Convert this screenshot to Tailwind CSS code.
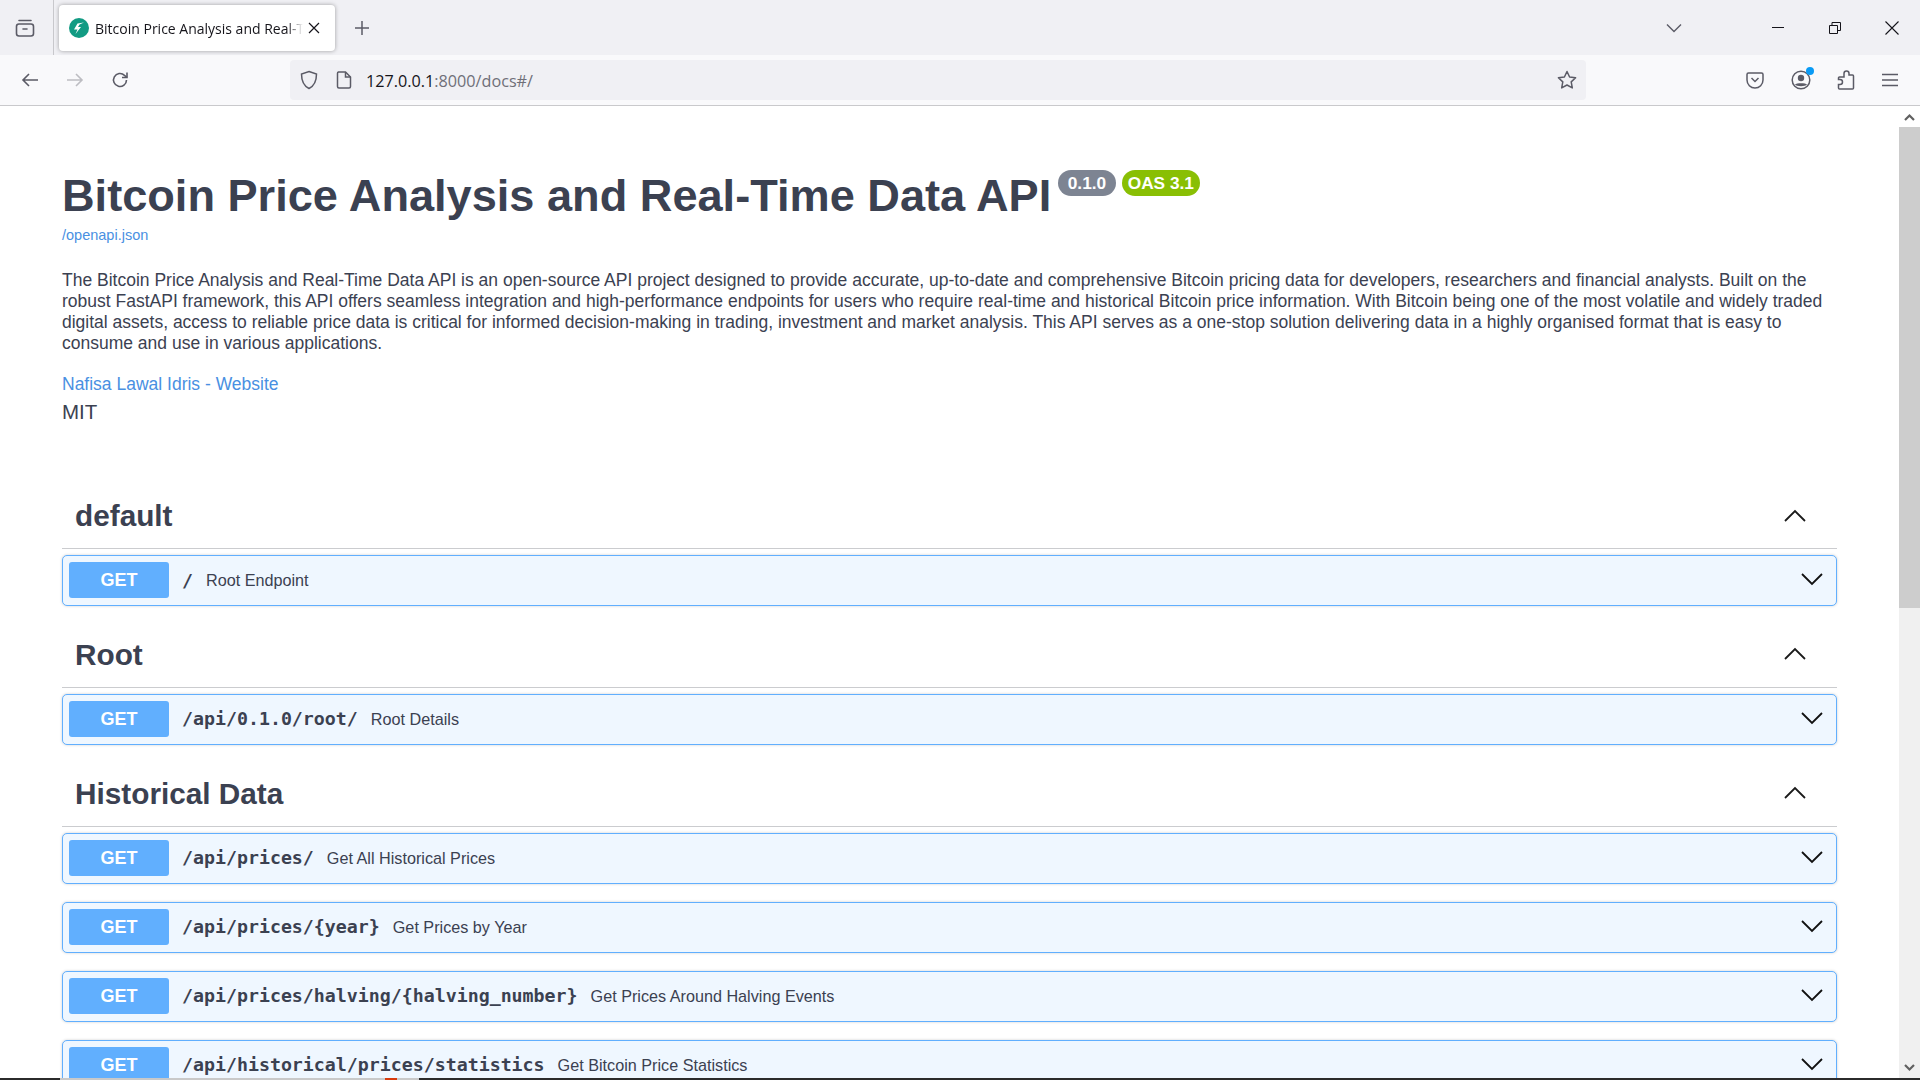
<!DOCTYPE html>
<html lang="en">
<head>
    <meta charset="UTF-8">
    <meta name="viewport" content="width=device-width, initial-scale=1.0">
    <title>Bitcoin Price Analysis and Real-Time Data API - Swagger UI</title>
    <script src="https://cdn.jsdelivr.net/npm/@tailwindcss/browser@4"></script>
</head>
<body class="h-[1080px] w-[1920px] overflow-hidden bg-white font-['Liberation_Sans',sans-serif]">
    <!-- Tab bar -->
    <div class="flex h-[55px] items-center bg-[#f0f0f4] font-['Open_Sans',sans-serif] text-[#15141a]">
        <div class="flex h-full w-[54px] items-center justify-center border-r border-[#c8c8cc] pr-[4px]">
            <svg class="h-5 w-5" fill="none" stroke="#5b5b66" stroke-width="1.6" viewBox="0 0 20 20">
                <rect x="1.500" y="6" width="17" height="12" rx="2.500" />
                <path d="M4 2.500h12M8 11h4" stroke-linecap="round" />
            </svg>
        </div>
        <div class="ml-[5px] flex h-[46px] w-[276px] items-center rounded-[4px] bg-white pl-[10px] shadow-[0_0_4px_rgba(0,0,0,0.35)]">
            <svg class="h-5 w-5 shrink-0" viewBox="0 0 20 20">
                <circle cx="10" cy="10" r="10" fill="#129b83" />
                <path d="M15 4.500 8.500 5.500 5 11.500h3.500L6.500 16l5.500-7h-3l1.500-2.500z" fill="#fff" />
            </svg>
            <div class="mt-px ml-[6px] w-[208px] overflow-hidden text-[14px] whitespace-nowrap [mask-image:linear-gradient(to_right,black_192px,transparent_208px)]">Bitcoin Price Analysis and Real-T</div>
            <svg class="ml-[5px] h-3 w-3" fill="none" stroke="#15141a" stroke-width="1.2" viewBox="0 0 12 12">
                <path d="M1 1l10 10M11 1 1 11" />
            </svg>
        </div>
        <svg class="ml-[19px] h-4 w-4" fill="none" stroke="#5b5b66" stroke-width="1.500" viewBox="0 0 16 16">
            <path d="M8 1v14M1 8h14" />
        </svg>
        <div class="flex-1"></div>
        <svg class="mr-[90px] h-3 w-4" fill="none" stroke="#5b5b66" stroke-width="1.400" viewBox="0 0 16 12">
            <path d="M1 2.500 8 9.500l7-7" />
        </svg>
        <div class="mr-[45px] h-px w-3 bg-[#15141a]"></div>
        <svg class="mr-[44px] h-3 w-3" fill="none" stroke="#15141a" viewBox="0 0 12 12">
            <path d="M.5 3.500h8v8h-8zM3 3.500V.5h8.500v8h-3" />
        </svg>
        <svg class="mr-[21px] h-[14px] w-[14px]" fill="none" stroke="#15141a" stroke-width="1.100" viewBox="0 0 14 14">
            <path d="M.5.5l13 13M13.500.5l-13 13" />
        </svg>
    </div>

    <!-- Toolbar -->
    <div class="flex h-[51px] items-center border-b border-[#c9c9cc] bg-[#f9f9fb]">
        <svg class="ml-[21px] h-4 w-[18px]" fill="none" stroke="#5b5b66" stroke-width="1.600" viewBox="0 0 18 16">
            <path d="M17 8H2M8 2 2 8l6 6" />
        </svg>
        <svg class="ml-[27px] h-4 w-[18px]" fill="none" stroke="#bdbdc2" stroke-width="1.600" viewBox="0 0 18 16">
            <path d="M1 8h15M10 2l6 6-6 6" />
        </svg>
        <svg class="ml-[27px] h-[18px] w-[18px]" fill="none" stroke="#5b5b66" stroke-width="1.600" viewBox="0 0 18 18">
            <path d="M15.500 9a6.500 6.500 0 1 1-2-4.700L16 6.500" />
            <path d="M16 1.500v5h-5" />
        </svg>
        <div class="ml-[161px] flex h-10 w-[1296px] items-center rounded-[4px] bg-[#f0f0f4] pr-[9px] pl-[10px]">
            <svg class="h-5 w-[18px]" fill="none" stroke="#5b5b66" stroke-width="1.500" viewBox="0 0 18 20">
                <path d="M9 1.500 16.500 4c0 7-1.500 11.500-7.500 14.500C3 15.500 1.500 11 1.500 4z" />
            </svg>
            <svg class="ml-[18px] h-[18px] w-4" fill="none" stroke="#5b5b66" stroke-width="1.500" viewBox="0 0 16 18">
                <path d="M2.500 1h7L14.500 6v9.500a1.500 1.500 0 0 1-1.500 1.500H3a1.500 1.500 0 0 1-1.500-1.500V2.500A1.500 1.500 0 0 1 2.500 1z" />
                <path d="M9.500 1v5h5" />
            </svg>
            <div class="mt-[3px] ml-[14px] font-['Open_Sans',sans-serif] text-[16.200px] text-[#15141a]">127.0.0.1<span class="text-[#6f6f78]">:8000/docs#/</span></div>
            <div class="flex-1"></div>
            <svg class="h-5 w-5" fill="none" stroke="#5b5b66" stroke-width="1.500" stroke-linejoin="round" viewBox="0 0 20 20">
                <path d="m10 1.500 2.600 5.500 6 .8-4.400 4.100 1.100 6L10 15l-5.300 2.900 1.100-6L1.400 7.800l6-.8z" />
            </svg>
        </div>
        <div class="flex-1"></div>
        <svg class="mr-[27px] h-[18px] w-[18px]" fill="none" stroke="#5b5b66" stroke-width="1.500" viewBox="0 0 18 18">
            <path d="M2.500 2h13A1.500 1.500 0 0 1 17 3.500V9a8 8 0 0 1-16 0V3.500A1.500 1.500 0 0 1 2.500 2z" />
            <path d="m5.500 7 3.500 3.500L12.500 7" />
        </svg>
        <div class="relative mr-[26px] h-5 w-5">
            <svg class="h-5 w-5" fill="none" viewBox="0 0 20 20">
                <circle cx="10" cy="10" r="8.800" stroke="#5b5b66" stroke-width="1.500" />
                <circle cx="10" cy="8" r="3.200" fill="#5b5b66" />
                <path d="M4 14.500c1.500-1.800 10.500-1.800 12 0-1.500 2.300-10.500 2.300-12 0z" fill="#5b5b66" />
            </svg>
            <div class="absolute -top-[3px] -right-[3px] h-2 w-2 rounded-full bg-[#0a9bf5]"></div>
        </div>
        <svg class="mr-[27px] h-5 w-[18px]" fill="none" stroke="#5b5b66" stroke-width="1.500" viewBox="0 0 18 20">
            <path d="M7 3.500a2.500 2.500 0 0 1 5 0V5h3.500a1 1 0 0 1 1 1v12a1 1 0 0 1-1 1H2.500a1 1 0 0 1-1-1v-3.500H3a2.500 2.500 0 0 0 0-5H1.500V8a1 1 0 0 1 1-1H7z" />
        </svg>
        <svg class="mr-[22px] h-4 w-4" fill="none" stroke="#5b5b66" stroke-width="1.400" viewBox="0 0 16 16">
            <path d="M0 2.500h16M0 8h16M0 13.500h16" />
        </svg>
    </div>

    <!-- Page -->
    <div class="flex h-[972px] overflow-hidden">
        <main class="w-[1899px] overflow-hidden px-[62px] text-[#3b4151]">
            <div class="flex items-start pt-[67px]">
                <h1 class="text-[45.150px] leading-[46px] font-bold whitespace-nowrap">Bitcoin Price Analysis and Real-Time Data API</h1>
                <span class="-mt-[3px] ml-[7px] rounded-[13px] bg-[#7d8492] px-[9.5px] py-[2px] text-[17.300px] leading-[22px] font-bold text-white">0.1.0</span>
                <span class="-mt-[3px] ml-[6px] rounded-[13px] bg-[#89bf04] px-[6px] py-[2px] text-[17.300px] leading-[22px] font-bold text-white">OAS 3.1</span>
            </div>
            <a class="mt-[6px] block text-[14.500px] leading-[20px] text-[#4990e2]" href="#">/openapi.json</a>
            <p class="mt-[25px] w-[1776px] text-[17.500px] leading-[21px]">The Bitcoin Price Analysis and Real-Time Data API is an open-source API project designed to provide accurate, up-to-date and comprehensive Bitcoin pricing data for developers, researchers and financial analysts. Built on the robust FastAPI framework, this API offers seamless integration and high-performance endpoints for users who require real-time and historical Bitcoin price information. With Bitcoin being one of the most volatile and widely traded digital assets, access to reliable price data is critical for informed decision-making in trading, investment and market analysis. This API serves as a one-stop solution delivering data in a highly organised format that is easy to consume and use in various applications.</p>
            <a class="mt-[20px] block text-[17.500px] leading-[21px] text-[#4990e2]" href="#">Nafisa Lawal Idris - Website</a>
            <div class="mt-[3px] text-[20.500px] leading-[28px]">MIT</div>

            <section class="mt-[59px]">
                <div class="flex h-[64px] items-center border-b border-[#cbcccf] pr-[30px] pl-[13px]">
                    <h3 class="flex-1 text-[29.750px] font-bold">default</h3>
                    <svg class="mb-[2px] h-4 w-6" fill="none" stroke="#1a1a1a" stroke-width="1.800" viewBox="0 0 24 16"><path d="M2 13 12 3l10 10" /></svg>
                </div>
                <div class="mt-[6px] flex h-[51px] items-center rounded-[5px] border border-[#61affe] bg-[#eff7ff] pl-[6px] shadow-[0_0_3px_rgba(0,0,0,0.19)]">
                    <span class="mb-px w-[100px] rounded-[3px] bg-[#61affe] py-[6px] text-center text-[18px] leading-[24px] font-bold text-white">GET</span>
                    <span class="ml-[13px] font-['DejaVu_Sans_Mono',monospace] text-[18.250px] font-bold">/</span>
                    <span class="ml-[13px] text-[16.200px]">Root Endpoint</span>
                    <div class="flex-1"></div>
                    <svg class="mr-[12px] mb-[3px] h-4 w-6" fill="none" stroke="#111" stroke-width="1.800" viewBox="0 0 24 16"><path d="M2 3l10 10L22 3" /></svg>
                </div>
            </section>

            <section class="mt-[17.5px]">
                <div class="flex h-[64px] items-center border-b border-[#cbcccf] pr-[30px] pl-[13px]">
                    <h3 class="flex-1 text-[29.750px] font-bold">Root</h3>
                    <svg class="mb-[2px] h-4 w-6" fill="none" stroke="#1a1a1a" stroke-width="1.800" viewBox="0 0 24 16"><path d="M2 13 12 3l10 10" /></svg>
                </div>
                <div class="mt-[6px] flex h-[51px] items-center rounded-[5px] border border-[#61affe] bg-[#eff7ff] pl-[6px] shadow-[0_0_3px_rgba(0,0,0,0.19)]">
                    <span class="mb-px w-[100px] rounded-[3px] bg-[#61affe] py-[6px] text-center text-[18px] leading-[24px] font-bold text-white">GET</span>
                    <span class="ml-[13px] font-['DejaVu_Sans_Mono',monospace] text-[18.250px] font-bold">/api/0.1.0/root/</span>
                    <span class="ml-[13px] text-[16.200px]">Root Details</span>
                    <div class="flex-1"></div>
                    <svg class="mr-[12px] mb-[3px] h-4 w-6" fill="none" stroke="#111" stroke-width="1.800" viewBox="0 0 24 16"><path d="M2 3l10 10L22 3" /></svg>
                </div>
            </section>

            <section class="mt-[18px]">
                <div class="flex h-[64px] items-center border-b border-[#cbcccf] pr-[30px] pl-[13px]">
                    <h3 class="flex-1 text-[29.750px] font-bold">Historical Data</h3>
                    <svg class="mb-[2px] h-4 w-6" fill="none" stroke="#1a1a1a" stroke-width="1.800" viewBox="0 0 24 16"><path d="M2 13 12 3l10 10" /></svg>
                </div>
                <div class="mt-[6px] flex h-[51px] items-center rounded-[5px] border border-[#61affe] bg-[#eff7ff] pl-[6px] shadow-[0_0_3px_rgba(0,0,0,0.19)]">
                    <span class="mb-px w-[100px] rounded-[3px] bg-[#61affe] py-[6px] text-center text-[18px] leading-[24px] font-bold text-white">GET</span>
                    <span class="ml-[13px] font-['DejaVu_Sans_Mono',monospace] text-[18.250px] font-bold">/api/prices/</span>
                    <span class="ml-[13px] text-[16.200px]">Get All Historical Prices</span>
                    <div class="flex-1"></div>
                    <svg class="mr-[12px] mb-[3px] h-4 w-6" fill="none" stroke="#111" stroke-width="1.800" viewBox="0 0 24 16"><path d="M2 3l10 10L22 3" /></svg>
                </div>
                <div class="mt-[18px] flex h-[51px] items-center rounded-[5px] border border-[#61affe] bg-[#eff7ff] pl-[6px] shadow-[0_0_3px_rgba(0,0,0,0.19)]">
                    <span class="mb-px w-[100px] rounded-[3px] bg-[#61affe] py-[6px] text-center text-[18px] leading-[24px] font-bold text-white">GET</span>
                    <span class="ml-[13px] font-['DejaVu_Sans_Mono',monospace] text-[18.250px] font-bold">/api/prices/{year}</span>
                    <span class="ml-[13px] text-[16.200px]">Get Prices by Year</span>
                    <div class="flex-1"></div>
                    <svg class="mr-[12px] mb-[3px] h-4 w-6" fill="none" stroke="#111" stroke-width="1.800" viewBox="0 0 24 16"><path d="M2 3l10 10L22 3" /></svg>
                </div>
                <div class="mt-[18px] flex h-[51px] items-center rounded-[5px] border border-[#61affe] bg-[#eff7ff] pl-[6px] shadow-[0_0_3px_rgba(0,0,0,0.19)]">
                    <span class="mb-px w-[100px] rounded-[3px] bg-[#61affe] py-[6px] text-center text-[18px] leading-[24px] font-bold text-white">GET</span>
                    <span class="ml-[13px] font-['DejaVu_Sans_Mono',monospace] text-[18.250px] font-bold">/api/prices/halving/{halving_number}</span>
                    <span class="ml-[13px] text-[16.200px]">Get Prices Around Halving Events</span>
                    <div class="flex-1"></div>
                    <svg class="mr-[12px] mb-[3px] h-4 w-6" fill="none" stroke="#111" stroke-width="1.800" viewBox="0 0 24 16"><path d="M2 3l10 10L22 3" /></svg>
                </div>
                <div class="mt-[18px] flex h-[51px] items-center rounded-[5px] border border-[#61affe] bg-[#eff7ff] pl-[6px] shadow-[0_0_3px_rgba(0,0,0,0.19)]">
                    <span class="mb-px w-[100px] rounded-[3px] bg-[#61affe] py-[6px] text-center text-[18px] leading-[24px] font-bold text-white">GET</span>
                    <span class="ml-[13px] font-['DejaVu_Sans_Mono',monospace] text-[18.250px] font-bold">/api/historical/prices/statistics</span>
                    <span class="ml-[13px] text-[16.200px]">Get Bitcoin Price Statistics</span>
                    <div class="flex-1"></div>
                    <svg class="mr-[12px] mb-[3px] h-4 w-6" fill="none" stroke="#111" stroke-width="1.800" viewBox="0 0 24 16"><path d="M2 3l10 10L22 3" /></svg>
                </div>
            </section>
        </main>
        <!-- Scrollbar -->
        <div class="flex w-[21px] flex-col bg-[#f0f0f0]">
            <div class="flex h-[21px] items-center justify-center bg-white">
                <svg class="h-2 w-[11px]" fill="none" stroke="#606060" stroke-width="2.200" viewBox="0 0 11 8"><path d="M1 7l4.500-4.500L10 7" /></svg>
            </div>
            <div class="h-[481px] bg-[#cdcdcd]"></div>
            <div class="flex-1"></div>
            <div class="flex h-[21px] items-center justify-center">
                <svg class="h-2 w-[11px]" fill="none" stroke="#606060" stroke-width="2.200" viewBox="0 0 11 8"><path d="M1 1l4.500 4.500L10 1" /></svg>
            </div>
        </div>
    </div>
    <!-- Bottom edge of the window -->
    <div class="flex h-[2px]">
        <div class="w-[60px] bg-[#2b2b2b]"></div>
        <div class="w-[325px] bg-[#c9c9c9]"></div>
        <div class="w-[12px] bg-[#d83a0c]"></div>
        <div class="w-[22px] bg-[#c9c9c9]"></div>
        <div class="flex-1 bg-[#2b2b2b]"></div>
    </div>
</body>
</html>
